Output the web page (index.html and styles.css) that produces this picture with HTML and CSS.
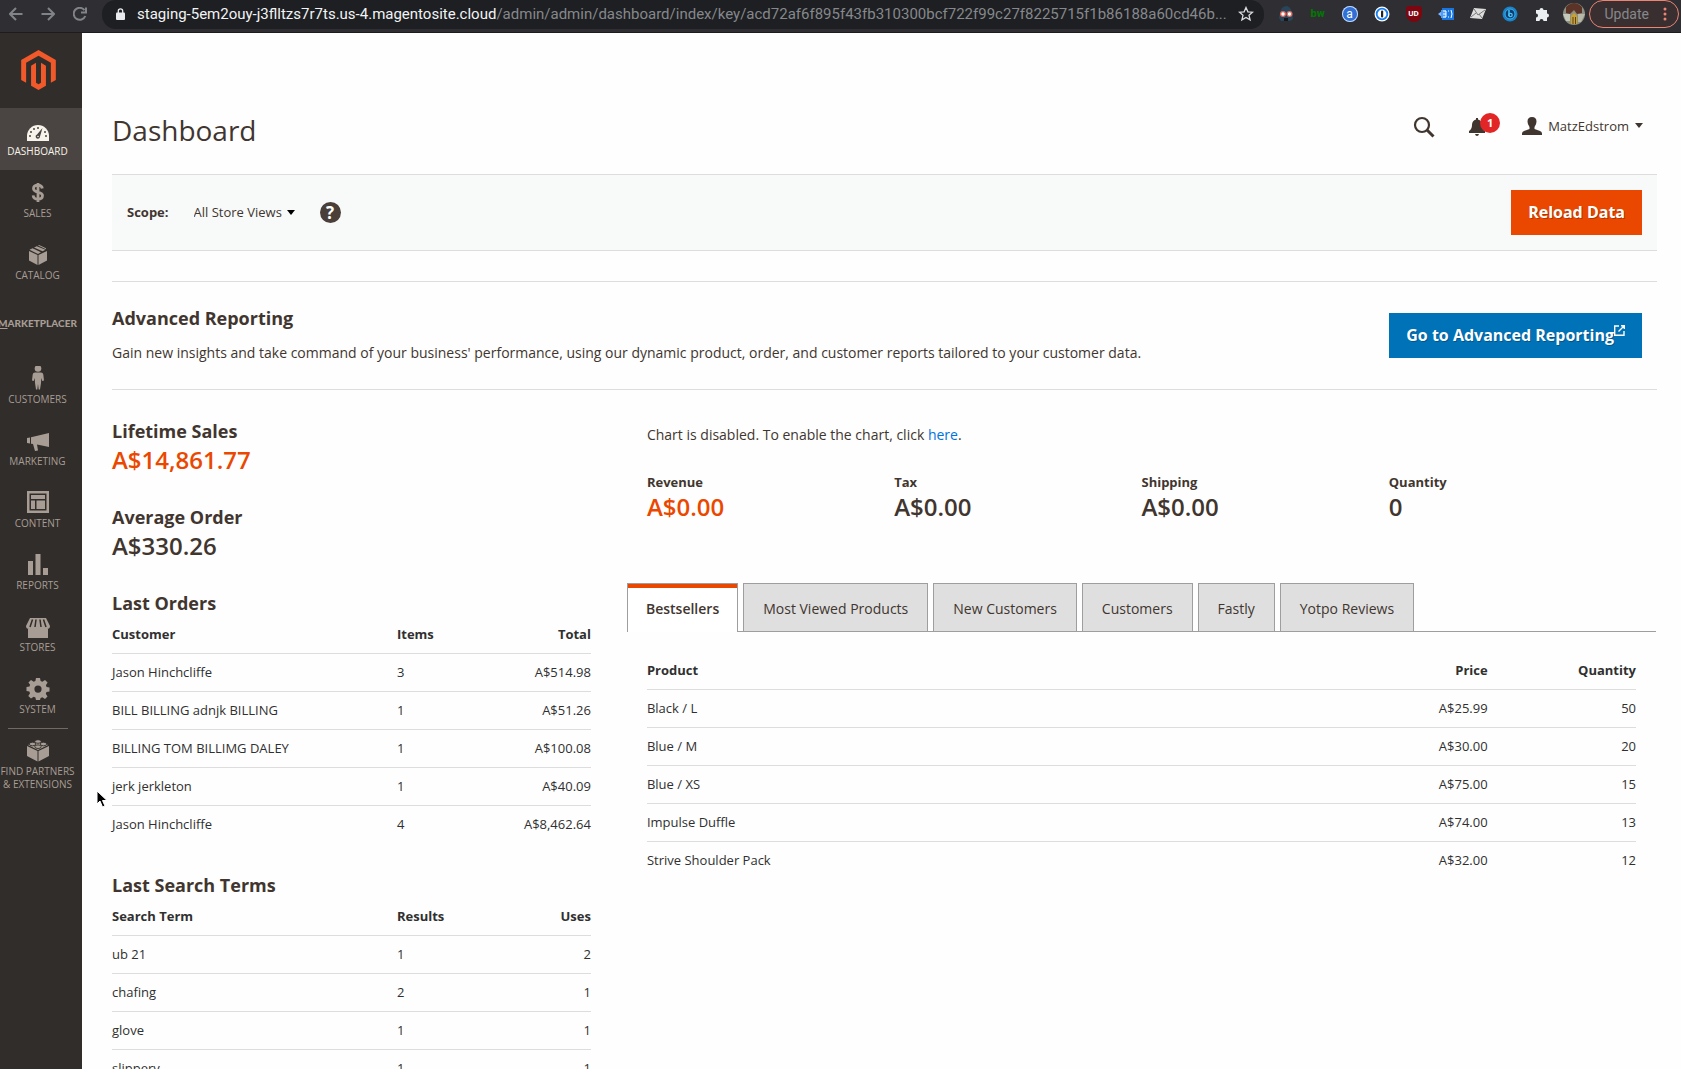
FILE: index.html
```
<!DOCTYPE html>
<html lang="en">
<head>
  <meta charset="UTF-8">
  <meta name="viewport" content="width=device-width, initial-scale=1.0">
  <title>Dashboard / Magento Admin</title>
  <link rel="stylesheet" href="styles.css">
</head>
<body>
  <!-- Browser bar -->
  <div class="browser">
    <div class="browser-nav">
      <button aria-label="Back"><svg width="14" height="14" viewBox="0 0 14 14"><path d="M13.500 7H1M7 1L1 7l6 6"/></svg></button>
      <button aria-label="Forward"><svg width="14" height="14" viewBox="0 0 14 14"><path d="M.5 7H13M7 1l6 6-6 6"/></svg></button>
      <button aria-label="Reload"><svg width="14" height="14" viewBox="0 0 14 14"><path d="M12.300 9A6 6 0 1 1 11.500 3.200M13 .5V5.500H8"/></svg></button>
    </div>
    <div class="address">
      <svg width="9" height="12" viewBox="0 0 9 12"><path d="M2.300 5V3a2.200 2.200 0 0 1 4.400 0v2" fill="none" stroke="#e8eaed" stroke-width="1.300"/><rect y="4.500" width="9" height="7.500" rx="1" fill="#e8eaed"/></svg>
      <div class="url"><span class="host">staging-5em2ouy-j3flltzs7r7ts.us-4.magentosite.cloud</span>/admin/admin/dashboard/index/key/acd72af6f895f43fb310300bcf722f99c27f8225715f1b86188a60cd46b...</div>
      <button class="star" aria-label="Bookmark"><svg width="16" height="16" viewBox="0 0 16 16"><path d="M8 1.500l1.900 4.300 4.600.4-3.500 3.100 1.100 4.600L8 11.400l-4.100 2.500L5 9.300 1.500 6.200l4.600-.4z" fill="none" stroke="#dadce0" stroke-width="1.300"/></svg></button>
    </div>
    <div class="extensions">
      <svg width="16" height="16" viewBox="0 0 16 16"><path d="M2 7Q3 0 9 0q6 2 6 13l-3 2H3l-2-3z" fill="#27465c"/><circle cx="5" cy="8" r="3" fill="#e36a5c"/><circle cx="11.500" cy="8" r="3" fill="#e36a5c"/><circle cx="5" cy="8" r="1.700" fill="#fff"/><circle cx="11.500" cy="8" r="1.700" fill="#fff"/><path d="M6 12h4v3H6z" fill="#12171d"/></svg>
      <span class="ext-bw">bw</span>
      <span class="ext-a">a</span>
      <svg width="16" height="16" viewBox="0 0 16 16"><circle cx="8" cy="8" r="7.500" fill="#fff"/><circle cx="8" cy="8" r="5.300" fill="#fff" stroke="#1a7ff0" stroke-width="1.800"/><rect x="7" y="4.500" width="2.200" height="7" rx="1" fill="#222"/></svg>
      <span class="ext-ud">UD</span>
      <svg width="16" height="16" viewBox="0 0 16 16"><rect x="4" y="2" width="12" height="12" fill="#1976e0"/><path d="M0 8l4-3v6z" fill="#7eb8ff"/><path d="M3 4h5v8H3z" fill="#4d9dfa"/><path d="M5 5h3M5 8h3M5 11h3M8 5v6M10 5h1M10 11h1M13 4q2 4 0 8" stroke="#fff" fill="none"/></svg>
      <svg width="16" height="16" viewBox="0 0 16 16"><path d="M4 2l12 1-4 10-12-1z" fill="#dedede"/><path d="M4 3l4 6 7-5M1 11l5-4M9 8l3 4" stroke="#777" fill="none"/></svg>
      <svg width="16" height="16" viewBox="0 0 16 16"><circle cx="8" cy="8" r="7.500" fill="#1b82c9"/><circle cx="8" cy="8" r="5" fill="#123b70" stroke="#35b6ee"/><path d="M7 4v6" stroke="#46c3f5" stroke-width="1.500"/><circle cx="8.500" cy="9" r="1.700" fill="none" stroke="#46c3f5" stroke-width="1.300"/></svg>
      <svg width="16" height="16" viewBox="0 0 16 16"><path d="M2 4h3.500a2 2 0 1 1 4 0H13v3.500a2 2 0 1 1 0 4V15H9.500a2 2 0 1 0-4 0H2v-3.500a2 2 0 1 0 0-4z" fill="#eceff1"/></svg>
      <svg class="avatar" width="22" height="22" viewBox="0 0 22 22"><circle cx="11" cy="11" r="11" fill="#8d8f82"/><path d="M3 4Q11-4 19 4v6l-5 1-3-4-4 4-4-1z" fill="#5c3427"/><path d="M0 11h7v7H3z" fill="#c4c9bd"/><path d="M15 11h7l-4 8h-3z" fill="#b6b8a8"/><path d="M8 13l3-3 3 3v8H8z" fill="#caa02f"/><path d="M10 14v7M12.500 14v7" stroke="#5d4214"/></svg>
    </div>
    <button class="update">Update <svg width="4" height="14" viewBox="0 0 4 14"><circle cx="2" cy="2" r="1.500"/><circle cx="2" cy="7" r="1.500"/><circle cx="2" cy="12" r="1.500"/></svg></button>
  </div>

  <div class="page">
    <!-- Sidebar -->
    <nav class="sidebar">
      <a class="logo" href="#" aria-label="Magento"><svg width="35" height="40" viewBox="1.609 0 20.782 24"><path fill="#f1592a" d="M12 24l-4.455-2.572v-12l2.970-1.715v12.001l1.485.902 1.485-.902V7.713l2.971 1.715v12L12 24zM22.391 6v12l-2.969 1.714V7.713L12 3.430 4.574 7.713v12.001L1.609 18V6L12 0l10.391 6z"/></svg></a>
      <a class="item active" href="#">
        <svg viewBox="0 0 24 24"><path d="M1 23v-5a11 11 0 0 1 22 0v5z"/><g fill="#4a4542"><circle cx="4" cy="18" r="1"/><circle cx="5" cy="14" r="1"/><circle cx="8" cy="11" r="1"/><circle cx="12" cy="10" r="1"/><circle cx="19" cy="14" r="1"/><circle cx="20" cy="18" r="1"/><path d="M16.500 10l-2.500 8.500a2.200 2.200 0 1 1-3-2z"/></g><circle cx="12" cy="18.500" r=".8"/></svg>
        <span>Dashboard</span>
      </a>
      <a class="item" href="#">
        <svg viewBox="0 0 24 24"><path d="M16.300 8.500C16 6 14.400 5.200 12 5.200S7.500 6.300 7.500 8.600c0 4.800 9 2.500 9 6.900 0 2.500-2 3.600-4.500 3.600s-4.600-1-4.900-3.800M12 3v19" fill="none" stroke="currentColor" stroke-width="2.800"/></svg>
        <span>Sales</span>
      </a>
      <a class="item" href="#">
        <svg viewBox="0 0 24 24"><path d="M3 9l8.500 4v10L3 18.500zM21 9l-8.500 4v10l8.500-4.500zM3.500 7.800l3-1.500 8.500 4-3 1.600zM8 5.600l2.800-1.400 8.700 3.600-3 1.500zM12 3.400L13 3l7 3.200v1z"/></svg>
        <span>Catalog</span>
      </a>
      <a class="item marketplacer" href="#"><span><u>M</u>ARKETPLACER</span></a>
      <a class="item" href="#">
        <svg viewBox="0 0 24 24"><circle cx="12" cy="2.500" r="3.300"/><path d="M9 6.500h6q2 0 2.300 2l.7 6-1.700.5-1-3-.3 5-1 6.500h-1.300L12 18l-.7 5.500H10L9 17l-.3-5-1 3-1.700-.5.700-6q.3-2 2.300-2z"/></svg>
        <span>Customers</span>
      </a>
      <a class="item" href="#">
        <svg viewBox="0 0 24 24"><path d="M1 10l3-.5v6L1 15zM5 9.300L23 5v14l-12-2.500 1 6-3 .5-2-7-2-.3z"/></svg>
        <span>Marketing</span>
      </a>
      <a class="item" href="#">
        <svg viewBox="0 0 24 24"><path d="M1 1h22v22H1zm2.500 2.500v17h17v-17z" fill-rule="evenodd"/><path d="M5 5h14v4H5zM5 10.500h4V19H5zM10.500 10.500H19V19h-8.500z"/></svg>
        <span>Content</span>
      </a>
      <a class="item" href="#">
        <svg viewBox="0 0 24 24"><path d="M2 9h5v14H2zM9.500 2h5v21h-5zM17 16h5v7h-5z"/></svg>
        <span>Reports</span>
      </a>
      <a class="item" href="#">
        <svg viewBox="0 0 24 24"><path d="M2 15h20v9H2z"/><path d="M4 4h16l4 8q0 3-3 3H3q-3 0-3-3z"/><path d="M6.500 5.500L4 13M10 5.500L9 13M14 5.500l1 7.500M17.500 5.500L20 13" stroke="#312d2a" stroke-width="1.500"/></svg>
        <span>Stores</span>
      </a>
      <a class="item" href="#">
        <svg viewBox="0 0 24 24"><path fill-rule="evenodd" d="M10 2h4l.6 3 1.700.7L19 4l2.600 2.600-1.700 2.600.7 1.700 2.900.6v4l-3 .6-.7 1.600 1.700 2.700L19 23l-2.700-1.700-1.700.7-.6 2h-4l-.6-2.500-1.700-.7L5 22.500 2.300 20 4 17.200l-.7-1.700-2.800-.5v-4l3-.5.6-1.700L2.400 6.600 5 4l2.700 1.700L9.400 5zM12 9.500a3.600 3.600 0 1 0 0 7.200 3.600 3.600 0 0 0 0-7.200z"/></svg>
        <span>System</span>
      </a>
      <a class="item partners" href="#">
        <svg viewBox="0 0 24 24"><path d="M1 8l10.500 5v10.500L1 18zM23 8l-10.500 5v10.500L23 18z"/><path d="M2 7l10-4.500L22 7l-10 5z"/><g stroke="#312d2a" stroke-width=".9"><ellipse cx="12" cy="3.500" rx="3.200" ry="1.800"/><ellipse cx="6.500" cy="6" rx="3.200" ry="1.800"/><ellipse cx="17.500" cy="6" rx="3.200" ry="1.800"/><ellipse cx="12" cy="8.700" rx="3.200" ry="1.800"/></g></svg>
        <span>Find Partners<br>&amp; Extensions</span>
      </a>
    </nav>

    <main class="content">
      <header class="page-header">
        <h1>Dashboard</h1>
        <div class="header-tools">
          <button class="search" aria-label="Search"><svg width="22" height="22" viewBox="0 0 22 22"><circle cx="9" cy="9" r="7" fill="none" stroke="#41362f" stroke-width="2.200"/><path d="M14 14l6.500 6.500" stroke="#41362f" stroke-width="3"/></svg></button>
          <button class="bell" aria-label="Notifications"><svg width="16" height="18" viewBox="0 0 16 18"><path d="M7 0h2v1.500q4 1 4 5.500 0 4 3 6v2H0v-2q3-2 3-6 0-4.500 4-5.500zM6 16h4q-.5 2-2 2t-2-2z" fill="#41362f"/></svg><span class="badge">1</span></button>
          <button class="user"><svg width="20" height="18" viewBox="0 0 20 18"><path d="M10 0q4.500 0 4.500 4.500 0 3-2 5.500v2l5.500 2q2 .7 2 2.500V18H0v-1.500q0-1.800 2-2.500l5.500-2v-2q-2-2.500-2-5.500Q5.500 0 10 0z" fill="#41362f"/></svg><span>MatzEdstrom</span><i class="caret"></i></button>
        </div>
      </header>

      <div class="scope-bar">
        <label for="scope">Scope:</label>
        <div class="select">
          <select id="scope"><option>All Store Views</option></select>
          <i class="caret"></i>
        </div>
        <button class="help" aria-label="Help">?</button>
        <button class="btn primary">Reload Data</button>
      </div>

      <section class="reporting">
        <div class="reporting-text">
          <h2>Advanced Reporting</h2>
          <p>Gain new insights and take command of your business' performance, using our dynamic product, order, and customer reports tailored to your customer data.</p>
        </div>
        <a class="btn secondary" href="#">Go to Advanced Reporting<svg width="11" height="11" viewBox="0 0 11 11"><path d="M5 1H.7v9.300H10V6M7 .7h3.300V4M10 1L4.500 6.500" fill="none" stroke="#fff" stroke-width="1.400"/></svg></a>
      </section>

      <div class="columns">
        <div class="stats">
          <section>
            <h2>Lifetime Sales</h2>
            <strong class="price orange">A$14,861.77</strong>
          </section>
          <section>
            <h2>Average Order</h2>
            <strong class="price">A$330.26</strong>
          </section>
          <section>
            <h2>Last Orders</h2>
            <table class="data orders">
              <thead><tr><th>Customer</th><th>Items</th><th>Total</th></tr></thead>
              <tbody>
                <tr><td>Jason Hinchcliffe</td><td>3</td><td>A$514.98</td></tr>
                <tr><td>BILL BILLING adnjk BILLING</td><td>1</td><td>A$51.26</td></tr>
                <tr><td>BILLING TOM BILLIMG DALEY</td><td>1</td><td>A$100.08</td></tr>
                <tr><td>jerk jerkleton</td><td>1</td><td>A$40.09</td></tr>
                <tr><td>Jason Hinchcliffe</td><td>4</td><td>A$8,462.64</td></tr>
              </tbody>
            </table>
          </section>
          <section>
            <h2>Last Search Terms</h2>
            <table class="data orders">
              <thead><tr><th>Search Term</th><th>Results</th><th>Uses</th></tr></thead>
              <tbody>
                <tr><td>ub 21</td><td>1</td><td>2</td></tr>
                <tr><td>chafing</td><td>2</td><td>1</td></tr>
                <tr><td>glove</td><td>1</td><td>1</td></tr>
                <tr><td>slippery</td><td>1</td><td>1</td></tr>
              </tbody>
            </table>
          </section>
        </div>

        <div class="store">
          <p class="chart-note">Chart is disabled. To enable the chart, click <a href="#">here</a>.</p>
          <div class="totals">
            <div><span>Revenue</span><strong class="price orange">A$0.00</strong></div>
            <div><span>Tax</span><strong class="price">A$0.00</strong></div>
            <div><span>Shipping</span><strong class="price">A$0.00</strong></div>
            <div><span>Quantity</span><strong class="price">0</strong></div>
          </div>
          <div class="tabs">
            <button class="tab current">Bestsellers</button>
            <button class="tab">Most Viewed Products</button>
            <button class="tab">New Customers</button>
            <button class="tab">Customers</button>
            <button class="tab">Fastly</button>
            <button class="tab">Yotpo Reviews</button>
          </div>
          <div class="tab-panel">
            <table class="data products">
              <thead><tr><th>Product</th><th>Price</th><th>Quantity</th></tr></thead>
              <tbody>
                <tr><td>Black / L</td><td>A$25.99</td><td>50</td></tr>
                <tr><td>Blue / M</td><td>A$30.00</td><td>20</td></tr>
                <tr><td>Blue / XS</td><td>A$75.00</td><td>15</td></tr>
                <tr><td>Impulse Duffle</td><td>A$74.00</td><td>13</td></tr>
                <tr><td>Strive Shoulder Pack</td><td>A$32.00</td><td>12</td></tr>
              </tbody>
            </table>
          </div>
        </div>
      </div>
    </main>
  </div>

  <!-- Mouse pointer -->
  <svg class="pointer" width="12" height="18" viewBox="0 0 12 18"><path d="M1 1v13l3-3 2.500 6 2.500-1-2.500-5.500H11z" fill="#000" stroke="#fff"/></svg>
</body>
</html>
```
FILE: styles.css
```
* {
  box-sizing: border-box;
}
body {
  margin: 0;
  height: 100vh;
  overflow: hidden;
  display: flex;
  flex-direction: column;
  background: #fefefe;
  color: #41362f;
  font-family: "Open Sans", "Noto Sans", sans-serif;
  font-size: 14px;
}
button, select {
  font: inherit;
  color: inherit;
  background: none;
  border: none;
  padding: 0;
}
h1, h2, p {
  margin: 0;
}
a {
  color: #0073e0;
  text-decoration: none;
}
svg {
  display: block;
  flex-shrink: 0;
}

/* Browser bar */
.browser {
  display: flex;
  align-items: center;
  flex-shrink: 0;
  height: 33px;
  padding: 0 2px 4px 0;
  background: #2f2f33;
  border-bottom: 1px solid #1c1c1f;
  font-family: Roboto, sans-serif;
  font-size: 15px;
}
.browser-nav {
  display: flex;
  gap: 18px;
  padding: 0 15px 0 9px;
}
.browser-nav svg {
  fill: none;
  stroke: #808387;
  stroke-width: 2;
}
.address {
  flex: 1;
  min-width: 0;
  display: flex;
  align-items: center;
  gap: 12px;
  height: 29px;
  padding: 0 10px 0 14px;
  background: #1e1f22;
  border-radius: 14px;
}
.url {
  flex: 1;
  overflow: hidden;
  white-space: nowrap;
  color: #85888c;
}
.host {
  color: #f1f3f4;
}
.star {
  margin-left: -8px;
}
.extensions {
  display: flex;
  align-items: center;
  gap: 16px;
  padding: 0 7px 0 14px;
}
.extensions span {
  width: 16px;
  text-align: center;
  line-height: 16px;
}
.ext-bw {
  color: #067306;
  font-size: 11px;
  font-weight: 900;
}
.ext-a {
  background: #2f6fd6;
  border-radius: 50%;
  box-shadow: 0 0 0 1px #c8dcf7 inset;
  color: #fff;
  font-size: 12px;
}
.ext-ud {
  background: #7d0610;
  border-radius: 3px 3px 8px 8px;
  color: #fff;
  font-size: 8px;
  font-weight: 700;
}
.avatar {
  margin: 0 -3px;
}
.update {
  display: flex;
  align-items: center;
  gap: 14px;
  height: 28px;
  padding: 0 11px 0 15px;
  border: 1px solid #ee8473;
  border-radius: 14px;
  background: #3a2f30;
  color: #85888c;
  font-size: 14px;
}
.update svg {
  fill: #ee8473;
}

.page {
  flex: 1;
  min-height: 0;
  display: flex;
}

/* Sidebar */
.sidebar {
  flex-shrink: 0;
  width: 82px;
  overflow: hidden;
  background: #312d2a;
}
.logo {
  display: flex;
  justify-content: center;
  height: 75px;
  padding: 17px 5px 0 0;
}
.item {
  display: flex;
  flex-direction: column;
  align-items: center;
  gap: 3px;
  height: 62px;
  padding: 10px 7px 0 0;
  color: #a79d95;
  font-size: 10px;
  line-height: 13px;
  text-align: center;
  text-transform: uppercase;
  white-space: nowrap;
}
.item svg {
  width: 24px;
  height: 24px;
  fill: currentColor;
}
.item.active {
  background: #4a4542;
  color: #f7f3eb;
}
.marketplacer {
  justify-content: center;
  padding: 0 7px 4px 0;
  font-family: Lato, sans-serif;
  font-weight: 900;
}
.partners {
  position: relative;
  height: auto;
}
.partners::before {
  content: "";
  position: absolute;
  top: 0;
  left: 8px;
  width: 60px;
  border-top: 1px solid #736963;
}

/* Page header */
.content {
  flex: 1;
  min-width: 0;
  padding: 0 24px 0 30px;
}
.page-header {
  display: flex;
  justify-content: space-between;
  height: 141px;
  padding: 77px 14px 0 0;
}
h1 {
  font-size: 28px;
  font-weight: 400;
  line-height: 40px;
}
.header-tools {
  display: flex;
  align-items: center;
  height: 34px;
  font-size: 13px;
}
.bell {
  position: relative;
  margin: 0 37px 0 34px;
}
.badge {
  position: absolute;
  top: -5px;
  left: 11px;
  width: 20px;
  height: 20px;
  border-radius: 50%;
  background: #e22626;
  color: #fff;
  font-size: 11px;
  font-weight: 700;
  line-height: 20px;
}
.user {
  display: flex;
  align-items: center;
  gap: 6px;
  padding-bottom: 3px;
}
.caret {
  border: 4px solid transparent;
  border-top: 5px solid currentColor;
  border-bottom: 0;
}

/* Scope bar */
.scope-bar {
  display: flex;
  align-items: center;
  height: 77px;
  padding: 0 15px;
  background: #f8f9f9;
  border-top: 1px solid #ddd;
  border-bottom: 1px solid #ddd;
  font-size: 13px;
}
.scope-bar label {
  padding-bottom: 1px;
  font-weight: 700;
}
.select {
  display: flex;
  align-items: center;
  gap: 4px;
  margin: 0 25px;
  color: #000;
}
.select select {
  appearance: none;
  padding-bottom: 1px;
  color: #41362f;
}
.help {
  width: 21px;
  height: 21px;
  border-radius: 50%;
  background: #4a3f39;
  color: #fff;
  font-size: 17px;
  font-weight: 700;
  line-height: 21px;
}
.btn {
  display: flex;
  align-items: center;
  height: 45px;
  padding: 0 17px 2px;
  color: #fff;
  font-size: 16px;
  font-weight: 700;
  text-shadow: 1px 1px 0 rgba(0, 0, 0, 0.25);
  white-space: nowrap;
}
.btn svg {
  margin-bottom: 8px;
}
.primary {
  margin-left: auto;
  background: #ea4800;
}
.secondary {
  background: #0072b8;
}

/* Advanced reporting */
.reporting {
  display: flex;
  align-items: center;
  justify-content: space-between;
  height: 109px;
  margin-top: 30px;
  padding: 0 15px 0 0;
  border-top: 1px solid #ddd;
  border-bottom: 1px solid #ddd;
}
.reporting-text {
  padding-bottom: 3px;
}
.reporting p {
  margin-top: 12px;
  line-height: 20px;
}
h2 {
  font-size: 18px;
  font-weight: 700;
  line-height: 25px;
}

/* Columns */
.columns {
  display: grid;
  grid-template-columns: 31% 1fr;
  gap: 36px;
  padding-top: 29px;
}
.stats section {
  margin-bottom: 29px;
}
.price {
  display: block;
  font-size: 24px;
  font-weight: 600;
  line-height: 32px;
}
.orange {
  color: #ea4800;
}

/* Tables */
.data {
  width: 100%;
  table-layout: fixed;
  border-collapse: separate;
  border-spacing: 0;
  color: #303030;
  font-size: 13px;
  line-height: 17px;
}
.data th, .data td {
  height: 38px;
  padding: 0;
  text-align: left;
  border-bottom: 1px solid #ddd;
}
.data th {
  font-weight: 700;
}
.data tbody tr:last-child td {
  border-bottom-color: transparent;
}
.data th:last-child, .data td:last-child {
  text-align: right;
}
.orders th:first-child {
  width: 59.5%;
}
.products th:nth-child(2), .products td:nth-child(2) {
  text-align: right;
}
.products th:nth-child(n+2) {
  width: 15%;
}

/* Store totals and tabs */
.store {
  padding-right: 1px;
}
.chart-note {
  padding: 6px 20px 0;
  line-height: 20px;
}
.totals {
  display: grid;
  grid-template-columns: repeat(4, 1fr);
  padding: 28px 20px 0;
}
.totals span {
  display: block;
  font-size: 13px;
  font-weight: 700;
  line-height: 18px;
}
.tabs {
  display: flex;
  gap: 5px;
  margin-top: 60px;
  border-bottom: 1px solid #9e9e9e;
}
.tab {
  height: 48px;
  padding: 1px 19px 0;
  background: #dfdfdf;
  border: 1px solid #9e9e9e;
  border-bottom: none;
}
.tab.current {
  height: 49px;
  margin-bottom: -1px;
  padding: 0 18px;
  background: #fff;
  box-shadow: inset 0 4px 0 #ea4800;
  font-weight: 600;
}
.tab-panel {
  padding: 20px 20px 0;
}

/* Mouse pointer */
.pointer {
  position: absolute;
  top: 790px;
  left: 96px;
}
```
